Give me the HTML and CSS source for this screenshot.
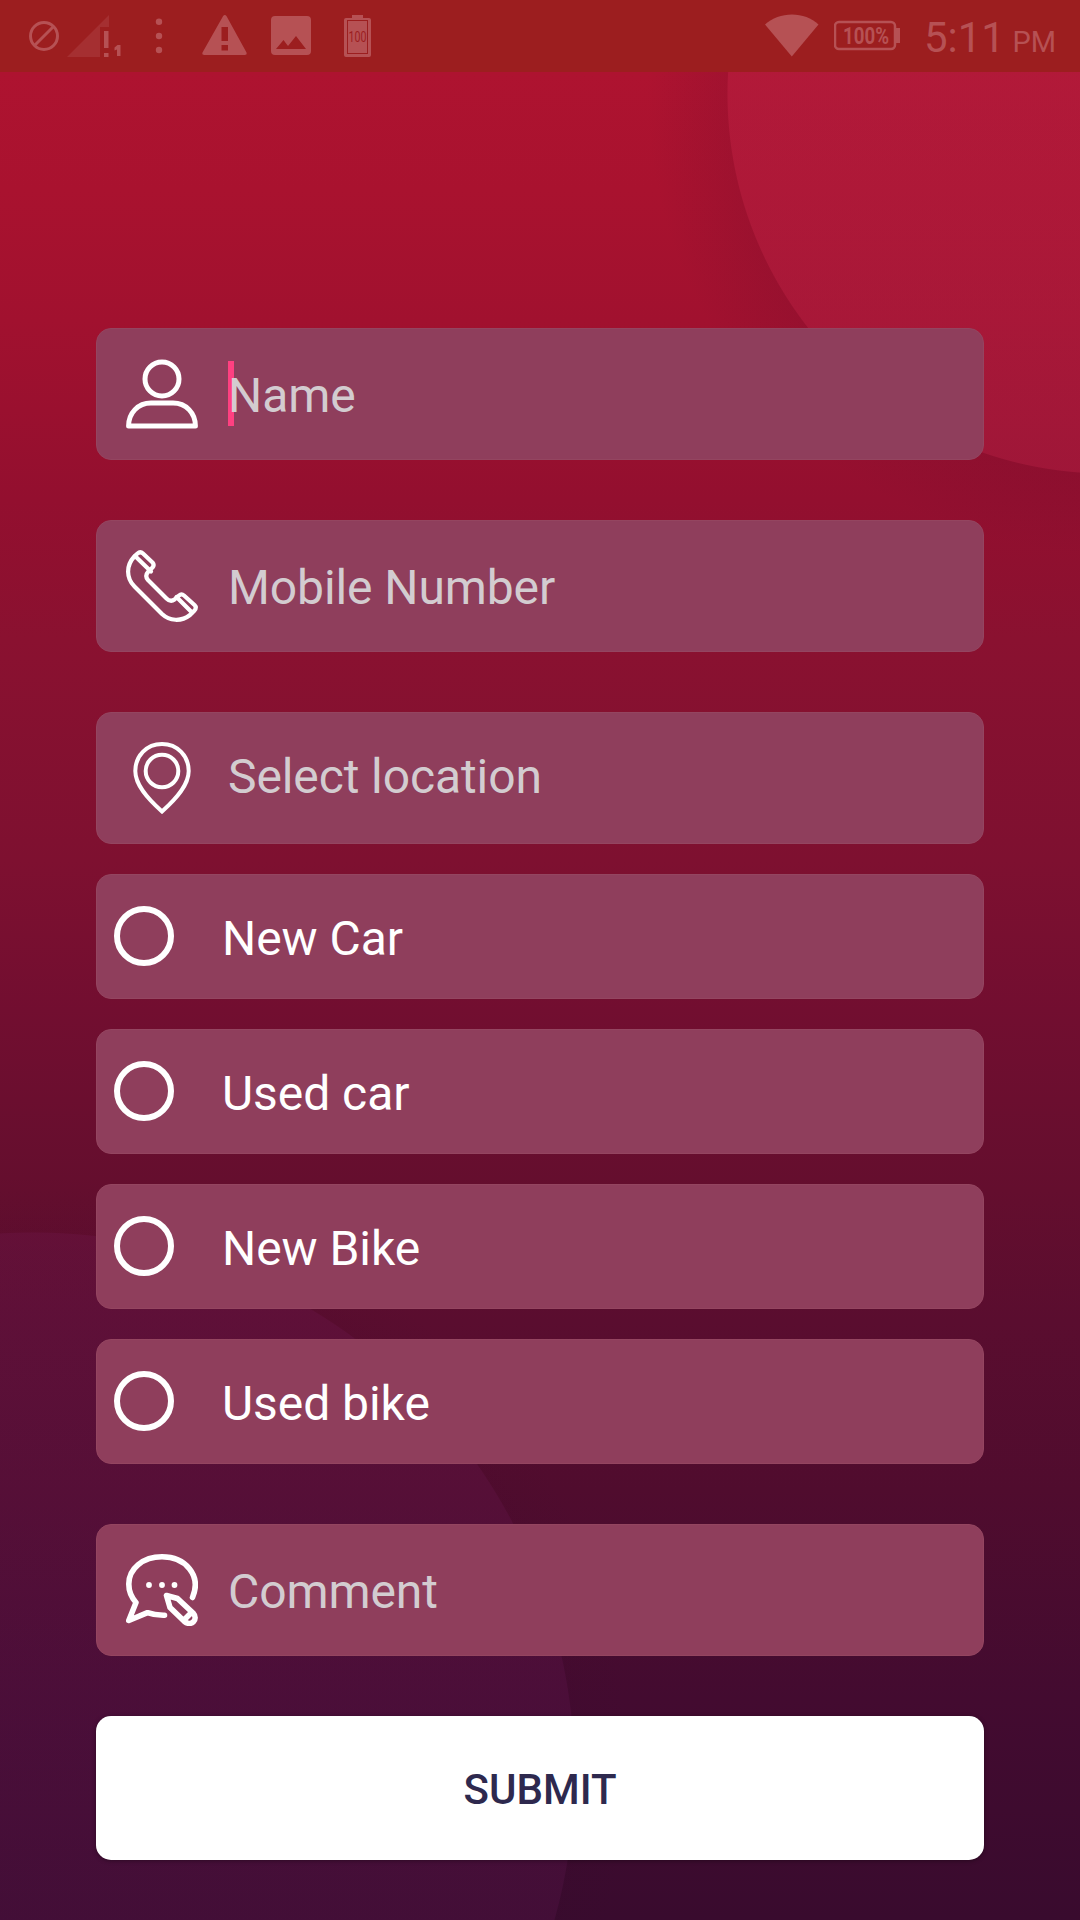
FILE: index.html
```html
<!DOCTYPE html>
<html lang="en">
<head>
  <meta charset="UTF-8" />
  <meta name="viewport" content="width=device-width, initial-scale=1" />
  <title>Enquiry</title>
  <link rel="stylesheet" href="styles.css">
</head>
<body>
  <header class="statusbar">
    <svg class="status-left" width="400" height="72" viewBox="0 0 400 72">
      <g class="line"><circle cx="44" cy="36" r="13.5" /><path d="M34.5 45.5L53.5 26.500" /></g>
      <path class="dim" d="M67 57L109 15V27H100V57Z" />
      <path d="M104 31H108.500V48H104ZM104 53H108.500V57H104Z" />
      <path d="M117.500 45H120.500V56H117V49.500L114.500 50.500V47.500Z" />
      <circle cx="159" cy="21.700" r="3.200" /><circle cx="159" cy="36" r="3.200" /><circle cx="159" cy="50" r="3.200" />
      <path fill-rule="evenodd" d="M223 16.200Q224.800 14 226.600 16.200L246.500 52.500Q247.300 55 244.500 55H204.500Q201.700 55 202.500 52.500ZM221.500 27V41H228V27ZM221.500 45V50.500H228V45Z" />
      <path fill-rule="evenodd" d="M275 16H307Q311 16 311 20V51Q311 55 307 55H275Q271 55 271 51V20Q271 16 275 16ZM276 49H306L296 36L288 46L283.500 40Z" />
      <path d="M352 15H363V18H369Q371 18 371 20V55Q371 57 369 57H346Q344 57 344 55V20Q344 18 346 18H352Z" />
      <rect class="cell" x="347.500" y="20.500" width="20" height="33" />
      <text class="cell-text" x="348.500" y="41.500" textLength="18" lengthAdjust="spacingAndGlyphs">100</text>
    </svg>
    <div class="status-right">
      <svg width="54" height="72" viewBox="0 0 54 72">
        <path d="M0 24.500C14 11 40 11 53.500 24.500L26.800 56.500Z" />
      </svg>
      <svg class="battery" width="68" height="72" viewBox="0 0 68 72">
        <rect class="outline" x="1" y="22" width="60" height="27" rx="4" />
        <path d="M61 28H66V43H61Z" />
        <text class="level" x="9" y="44" textLength="46" lengthAdjust="spacingAndGlyphs">100%</text>
      </svg>
      <div class="clock">5:11 <span class="ampm">PM</span></div>
    </div>
  </header>

  <main class="form">
    <div class="field">
      <svg class="icon" viewBox="0 0 72 72">
        <circle cx="36" cy="21" r="17" />
        <path d="M2.600 68C2.600 55 12 45 25 45H47C60 45 69.400 55 69.400 68Z" />
      </svg>
      <span class="hint">Name<i class="caret"></i></span>
    </div>

    <div class="field">
      <svg class="icon phone" viewBox="0 0 72 72">
        <path d="M8.300 6.500L11.500 3.500Q14.300 1 17 3.500L26.500 12.500Q28.700 15 26.500 17.500L22 22Q18.500 26 22 30L40.500 48.500Q44.500 52.500 48.500 49.500L53 45.500Q55.500 43.300 58 45.500L68.500 55Q71 57.500 68.500 60.500L64 65C55 72 43.500 71 36 64L8.500 36.500C0 28 0 15.500 8.300 6.500Z" />
        <path d="M9 6L25 21.500M50.500 47L66 62.500" />
      </svg>
      <span class="hint">Mobile Number</span>
    </div>

    <div class="field location">
      <svg class="icon pin" viewBox="0 0 72 72">
        <path d="M36 2C20.500 2 9.300 14 9.300 29C9.300 43 21.500 56.500 36 69.500C50.500 56.500 62.700 43 62.700 29C62.700 14 51.500 2 36 2Z" />
        <circle cx="36" cy="29" r="16.300" />
      </svg>
      <span class="hint">Select location</span>
    </div>

    <div class="options">
      <label class="option"><input type="radio" name="type"><span>New Car</span></label>
      <label class="option"><input type="radio" name="type"><span>Used car</span></label>
      <label class="option"><input type="radio" name="type"><span>New Bike</span></label>
      <label class="option"><input type="radio" name="type"><span>Used bike</span></label>
    </div>

    <div class="field">
      <svg class="icon comment" viewBox="0 0 72 72">
        <path d="M66.500 43.500C76 21 59 2.800 36 2.800C17 2.800 2.800 14.500 2.800 30C2.800 37.500 5.500 43.500 10 48.500L2.800 66.500L21.500 58.700Q29 61.500 38.500 61.300" />
        <path d="M40.500 41.500L51.500 44.500L67 59C73 65.500 65 73 58.500 67.500L44 53.500ZM57.500 66.500L65.500 58.500" />
        <g class="dots"><circle cx="23" cy="31" r="2.900" /><circle cx="36" cy="31" r="2.900" /><circle cx="48.500" cy="31" r="2.900" /></g>
      </svg>
      <span class="hint">Comment</span>
    </div>

    <button class="submit">SUBMIT</button>
  </main>
</body>
</html>
```
FILE: styles.css
```css
* {
  box-sizing: border-box;
}

body {
  margin: 0;
  height: 1920px;
  overflow: hidden;
  font-family: Roboto, sans-serif;
  color: #fff;
  /* two big circles over the red to purple fade */
  background:
    radial-gradient(circle at 1107px 94px, rgba(190, 45, 85, 0.24) 379px, rgba(100, 14, 46, 0.16) 380px, transparent 460px),
    radial-gradient(circle at 33px 1774px, rgba(115, 30, 100, 0.17) 541px, rgba(50, 5, 40, 0.05) 542px, transparent 600px),
    linear-gradient(#ae1330 72px, #a9122f 190px, #a1112f 320px, #930f2f 500px, #8a1130 640px, #7e1030 860px, #720e30 1010px, #640e2e 1190px, #5a0d2f 1320px, #500c2e 1490px, #430b30 1700px, #390b2e 1920px);
}

.statusbar {
  display: flex;
  justify-content: space-between;
  height: 72px;
  padding-right: 24px;
  background: #9c1e1f;
  color: #b65154;
}

.statusbar svg {
  display: block;
  fill: #b65154;
}

.line, .statusbar .outline {
  fill: none;
  stroke: #b65154;
  stroke-width: 2.5;
}

.line {
  stroke-width: 3;
}

.statusbar .dim {
  fill: #a52f31;
}

.cell {
  fill: none;
  stroke: #9c1e1f;
  stroke-width: 1;
}

.cell-text {
  font-size: 15px;
  fill: #9c1e1f;
}

.level {
  font-size: 23px;
  font-weight: 700;
}

.status-right {
  display: flex;
}

.battery {
  margin-left: 15px;
}

.clock {
  margin-left: 22px;
  font-size: 42px;
  line-height: 75px;
  white-space: nowrap;
}

.ampm {
  margin-left: -3px;
  font-size: 29px;
}

.form {
  display: flex;
  flex-direction: column;
  padding: 256px 96px 60px;
}

.field {
  display: flex;
  align-items: center;
  gap: 30px;
  height: 132px;
  margin-bottom: 60px;
  padding-left: 30px;
  border: 1px solid #944560;
  border-radius: 15px;
  background: #8f3e5c;
}

.field.location {
  margin-bottom: 30px;
}

.icon {
  width: 72px;
  height: 72px;
  margin-left: -1px;
  fill: none;
  stroke: #fff;
  stroke-width: 5;
  stroke-linejoin: round;
  stroke-linecap: round;
}

.icon.phone {
  stroke-width: 4.2;
}

.icon.pin {
  stroke-width: 4;
  stroke-linejoin: miter;
}

.icon.comment {
  stroke-width: 5.6;
}

.dots {
  fill: #fff;
  stroke: none;
}

.hint {
  position: relative;
  z-index: 0;
  padding-top: 3px;
  font-size: 48px;
  line-height: 56px;
  letter-spacing: -0.1px;
  color: #d3ccd0;
}

.location .hint {
  padding: 0 0 3px;
}

.caret {
  position: absolute;
  z-index: -1;
  left: 0;
  top: -4px;
  width: 6px;
  height: 65px;
  background: #ff4081;
}

.options {
  display: flex;
  flex-direction: column;
  gap: 30px;
  margin-bottom: 60px;
}

.option {
  display: flex;
  align-items: center;
  gap: 48px;
  height: 125px;
  padding-left: 17px;
  border: 1px solid #944560;
  border-radius: 15px;
  background: #8f3e5c;
  font-size: 48px;
  line-height: 56px;
  letter-spacing: -0.05px;
}

.option input {
  appearance: none;
  width: 60px;
  height: 60px;
  margin: 0 0 1px;
  border: 6px solid #fff;
  border-radius: 50%;
}

.option span {
  padding-top: 4px;
}

.submit {
  height: 144px;
  padding: 2px 0 0;
  border: none;
  border-radius: 15px;
  background: #fff;
  box-shadow: 0 1px 4px rgba(0, 0, 0, 0.35);
  color: #2e294e;
  font-family: inherit;
  font-size: 42px;
  font-weight: 500;
}
```
